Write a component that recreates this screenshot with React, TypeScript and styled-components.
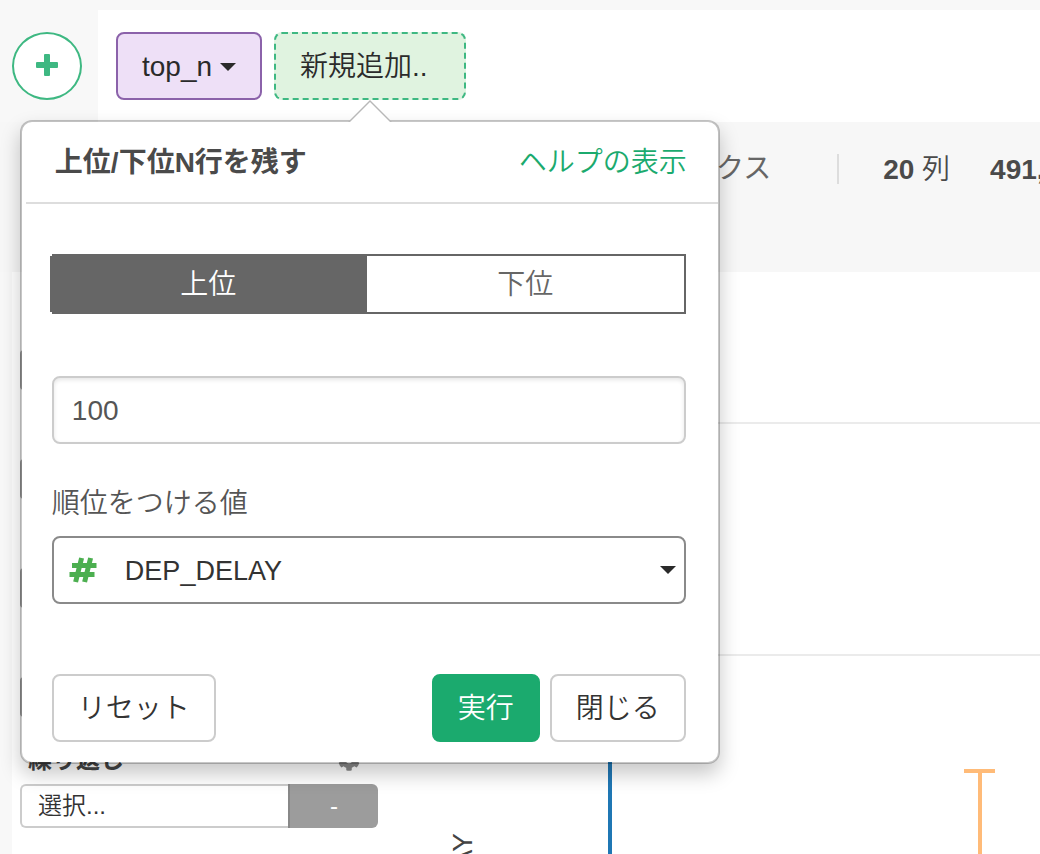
import React, { useState } from 'react';
import styled, { createGlobalStyle } from 'styled-components';
import { FaCog } from 'react-icons/fa';

const GlobalStyle = createGlobalStyle`
  *, *::before, *::after { box-sizing: border-box; }
  body {
    margin: 0;
    background: #f8f8f8;
    color: #4a4a4a;
    font-family: "Liberation Sans", "Noto Sans CJK JP", sans-serif;
    font-size: 28px;
    font-weight: 350;
    line-height: 40px;
  }
  b { font-weight: 700; }
  button, input, select { font: inherit; color: inherit; margin: 0; }
`;

const Page = styled.div`
  height: 100vh;
  overflow: hidden;
  display: flex;
  flex-direction: column;
`;

const StepRow = styled.header`
  display: flex;
  padding-top: 10px;
`;

const StepRail = styled.div`
  width: 98px;
  padding: 22px 12px 0;
`;

const AddStepButton = styled.button`
  display: flex;
  align-items: center;
  justify-content: center;
  width: 70px;
  height: 68px;
  padding: 0 0 2px;
  border: 2px solid #3eb882;
  border-radius: 50%;
  background: #fff;
`;

const StepTrack = styled.div`
  flex: 1;
  display: flex;
  gap: 12px;
  padding: 22px 18px;
  background: #fff;
`;

const StepToken = styled.button<{ $pending?: boolean }>`
  display: flex;
  align-items: center;
  gap: 8px;
  height: 68px;
  padding: 2px 24px 0;
  padding-right: ${(p) => (p.$pending ? 36 : 24)}px;
  border: 2px ${(p) => (p.$pending ? 'dashed #3eb882' : 'solid #8b62aa')};
  border-radius: 8px;
  background: ${(p) => (p.$pending ? '#e0f3e0' : '#eee0f7')};
  color: #2a2a2a;
  white-space: nowrap;
`;

const PopoverAnchor = styled.div`
  position: relative;
`;

const Popover = styled.section`
  position: absolute;
  z-index: 10;
  top: calc(100% + 20px);
  left: 50%;
  width: 700px;
  transform: translateX(-50%);
  border: 2px solid rgba(0, 0, 0, 0.22);
  border-radius: 12px;
  background: #fff;
  background-clip: padding-box;
  box-shadow: 0 10px 20px rgba(0, 0, 0, 0.22);
`;

const PopoverArrow = styled.svg`
  position: absolute;
  bottom: 100%;
  left: 50%;
  transform: translateX(-50%);
  display: block;
`;

const PopoverHeader = styled.div`
  display: flex;
  align-items: center;
  justify-content: space-between;
  height: 82px;
  margin-left: 4px;
  padding: 2px 31px 0 29px;
  border-bottom: 2px solid #ddd;
`;

const PopoverTitle = styled.h2`
  margin: 0;
  font-size: 28px;
  font-weight: 700;
`;

const HelpLink = styled.a`
  color: #1baa6e;
  text-decoration: none;
`;

const PopoverForm = styled.form`
  display: flex;
  flex-direction: column;
  padding: 50px 32px 20px 30px;
`;

const Segments = styled.div`
  display: flex;
  height: 60px;
  margin-bottom: 62px;
  border: 2px solid #666;
`;

const Segment = styled.button<{ $active: boolean }>`
  flex: 1;
  margin-left: ${(p) => (p.$active ? -4 : 0)}px;
  padding: 2px 0 0;
  border: 0;
  background: ${(p) => (p.$active ? '#666' : '#fff')};
  color: ${(p) => (p.$active ? '#fff' : '#666')};
`;

const CountInput = styled.input`
  width: 100%;
  height: 68px;
  margin-bottom: 40px;
  padding: 2px 18px 0;
  border: 2px solid #ccc;
  border-radius: 8px;
  background: #fff;
  box-shadow: inset 0 2px 4px rgba(0, 0, 0, 0.1);
  color: #555;
`;

const FieldLabel = styled.label`
  margin-bottom: 12px;
  color: #555;
`;

const ColumnPicker = styled.div`
  display: flex;
  align-items: center;
  height: 68px;
  margin-bottom: 70px;
  padding: 0 8px 0 15px;
  border: 2px solid #8a8a8a;
  border-radius: 8px;
  color: #333;
`;

const PlainSelect = styled.select`
  flex: 1;
  min-width: 0;
  height: 100%;
  padding: 0;
  border: 0;
  appearance: none;
  background: transparent;
`;

const ColumnSelect = styled(PlainSelect)`
  margin-left: 28px;
  padding-top: 2px;
  font-size: 27px;
`;

const Actions = styled.div`
  display: flex;
  gap: 10px;
`;

const ActionButton = styled.button<{ $primary?: boolean; $start?: boolean }>`
  height: 68px;
  padding: 2px 24px 0;
  margin-right: ${(p) => (p.$start ? 'auto' : '0')};
  border: 2px solid ${(p) => (p.$primary ? '#1baa6e' : '#ccc')};
  border-radius: 8px;
  background: ${(p) => (p.$primary ? '#1baa6e' : '#fff')};
  color: ${(p) => (p.$primary ? '#fff' : '#333')};
`;

const SummaryBar = styled.div`
  display: flex;
  align-items: flex-start;
  height: 150px;
  padding: 28px 0 0 716px;
  overflow: hidden;
  background: #f7f7f7;
  white-space: nowrap;
`;

const ChartKind = styled.span`
  margin-top: -1px;
  font-weight: 400;
  color: #666;
`;

const SummaryDivider = styled.span`
  width: 2px;
  height: 30px;
  margin: 4px 44px 0 66px;
  flex: none;
  background: #ddd;
`;

const Stat = styled.span`
  margin-right: 40px;
`;

const Workspace = styled.main`
  flex: 1;
  min-height: 0;
  display: flex;
  margin-left: 12px;
  overflow: hidden;
  background: #fff;
`;

const Sidebar = styled.aside`
  flex: none;
  width: 366px;
  padding: 78px 0 0 8px;
`;

const SlotList = styled.div`
  display: flex;
  flex-direction: column;
  gap: 69px;
`;

const Slot = styled.div`
  height: 40px;
  border-radius: 4px;
  background: #aaa;
`;

const RepeatHeading = styled.div`
  display: flex;
  align-items: center;
  justify-content: space-between;
  margin-top: 23px;
  padding: 0 18px 0 8px;
  font-size: 24px;
  font-weight: 700;
  color: #444;
  svg { color: #888; }
`;

const RepeatField = styled.div`
  display: flex;
  height: 44px;
  margin-top: 4px;
`;

const RepeatSelect = styled(PlainSelect)`
  padding: 0 16px;
  border: 2px solid #ccc;
  border-right: 0;
  border-radius: 6px 0 0 6px;
  font-size: 24px;
  color: #333;
`;

const RepeatButton = styled.button`
  width: 90px;
  padding: 0;
  border: 0;
  border-left: 2px solid #888;
  border-radius: 0 6px 6px 0;
  background: #9c9c9c;
  color: #fff;
  font-size: 24px;
`;

const Chart = styled.svg`
  flex: 1;
  min-width: 0;
  height: 100%;
`;

function Caret() {
  return (
    <svg width="16" height="8" viewBox="0 0 16 8" aria-hidden="true">
      <path d="M0 0H16L8 8Z" fill="#2a2a2a" />
    </svg>
  );
}

export default function App() {
  const [side, setSide] = useState('上位');

  return (
    <>
      <GlobalStyle />
      <Page>
        <StepRow>
          <StepRail>
            <AddStepButton aria-label="ステップを追加">
              <svg width="22" height="22" viewBox="0 0 22 22" aria-hidden="true">
                <rect x="0" y="8" width="22" height="6" rx="1" fill="#3eb882" />
                <rect x="8" y="0" width="6" height="22" rx="1" fill="#3eb882" />
              </svg>
            </AddStepButton>
          </StepRail>
          <StepTrack>
            <StepToken>
              top_n
              <Caret />
            </StepToken>
            <PopoverAnchor>
              <StepToken $pending>新規追加..</StepToken>
              <Popover role="dialog" aria-labelledby="popover-title">
                <PopoverArrow width="44" height="22" viewBox="0 0 44 22" aria-hidden="true">
                  <path d="M22 0L44 22H0Z" fill="#b8b8b8" />
                  <path d="M22 2L42 22H2Z" fill="#fff" />
                </PopoverArrow>
                <PopoverHeader>
                  <PopoverTitle id="popover-title">上位/下位N行を残す</PopoverTitle>
                  <HelpLink href="#help">ヘルプの表示</HelpLink>
                </PopoverHeader>
                <PopoverForm onSubmit={(e) => e.preventDefault()}>
                  <Segments role="group" aria-label="方向">
                    {['上位', '下位'].map((name) => (
                      <Segment
                        key={name}
                        type="button"
                        $active={side === name}
                        aria-pressed={side === name}
                        onClick={() => setSide(name)}
                      >
                        {name}
                      </Segment>
                    ))}
                  </Segments>
                  <CountInput type="text" aria-label="行数" defaultValue="100" />
                  <FieldLabel htmlFor="rank-column">順位をつける値</FieldLabel>
                  <ColumnPicker>
                    <svg width="28" height="26" viewBox="0 0 28 26" aria-hidden="true">
                      <g stroke="#4caf50" strokeWidth="5" fill="none">
                        <path d="M12.6 1L6.6 25M21.6 1L15.6 25" />
                        <path d="M3 8.5H27.5M0.5 17.5H25.5" />
                      </g>
                    </svg>
                    <ColumnSelect id="rank-column">
                      <option>DEP_DELAY</option>
                    </ColumnSelect>
                    <Caret />
                  </ColumnPicker>
                  <Actions>
                    <ActionButton type="reset" $start>リセット</ActionButton>
                    <ActionButton type="submit" $primary>実行</ActionButton>
                    <ActionButton type="button">閉じる</ActionButton>
                  </Actions>
                </PopoverForm>
              </Popover>
            </PopoverAnchor>
          </StepTrack>
        </StepRow>

        <SummaryBar>
          <ChartKind>クス</ChartKind>
          <SummaryDivider />
          <Stat><b>20</b> 列</Stat>
          <Stat><b>491,</b></Stat>
        </SummaryBar>

        <Workspace>
          <Sidebar>
            <SlotList>
              <Slot />
              <Slot />
              <Slot />
              <Slot />
            </SlotList>
            <RepeatHeading>
              <label htmlFor="repeat-by">繰り返し</label>
              <FaCog size={22} aria-hidden="true" />
            </RepeatHeading>
            <RepeatField>
              <RepeatSelect id="repeat-by">
                <option>選択...</option>
              </RepeatSelect>
              <RepeatButton aria-label="繰り返しの設定">-</RepeatButton>
            </RepeatField>
          </Sidebar>
          <Chart role="img" aria-label="DEP_DELAY">
            <g stroke="#ebebeb" strokeWidth="2">
              <line x1="232" x2="100%" y1="151" y2="151" />
              <line x1="232" x2="100%" y1="383" y2="383" />
            </g>
            <line x1="232" x2="232" y1="0" y2="100%" stroke="#1f77b4" strokeWidth="4" />
            <g stroke="#ffbb78" strokeWidth="4">
              <line x1="586" x2="617" y1="499" y2="499" />
              <line x1="602" x2="602" y1="499" y2="100%" />
            </g>
            <text transform="translate(94 561) rotate(-90)" textAnchor="end" fill="#444">
              DEP_DELAY
            </text>
          </Chart>
        </Workspace>
      </Page>
    </>
  );
}
